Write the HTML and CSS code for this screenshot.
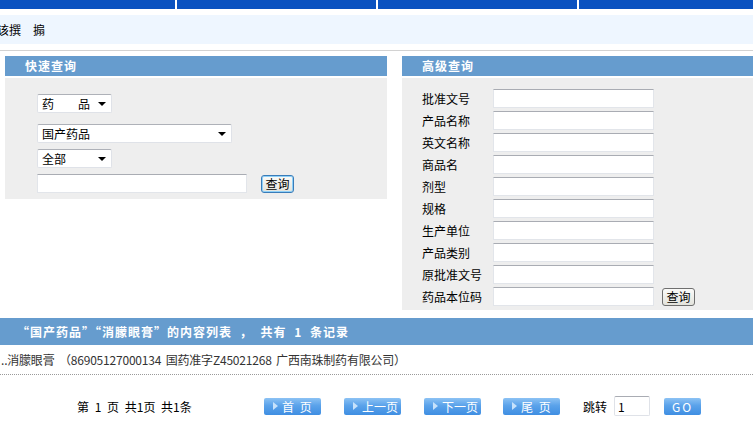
FILE: index.html
```html
<!DOCTYPE html>
<html>
<head>
    <meta charset="utf-8">
    <title>药品查询</title>
    <link rel="stylesheet" href="styles.css">
</head>
<body>

<div class="topnav">
    <span class="nav-cell first"></span>
    <span class="nav-cell mid"></span>
    <span class="nav-cell mid"></span>
    <span class="nav-cell last"></span>
</div>

<div class="crumb">该撰　搧</div>
<div class="rule"></div>

<div class="search">

    <div class="panel quick">
        <div class="panel-title">快速查询</div>
        <div class="panel-body">
            <div class="select short gap-big"><span>药　　品</span></div>
            <div class="select wide gap"><span>国产药品</span></div>
            <div class="select short gap"><span>全部</span></div>
            <div class="quick-row">
                <input type="text" class="text-input quick-input">
                <button type="button" class="query-btn focused">查询</button>
            </div>
        </div>
    </div> <!-- quick -->

    <div class="panel advanced">
        <div class="panel-title">高级查询</div>
        <div class="panel-body">
            <div class="adv-row"><label>批准文号</label><input type="text" class="text-input adv-input"></div>
            <div class="adv-row"><label>产品名称</label><input type="text" class="text-input adv-input"></div>
            <div class="adv-row"><label>英文名称</label><input type="text" class="text-input adv-input"></div>
            <div class="adv-row"><label>商品名</label><input type="text" class="text-input adv-input"></div>
            <div class="adv-row"><label>剂型</label><input type="text" class="text-input adv-input"></div>
            <div class="adv-row"><label>规格</label><input type="text" class="text-input adv-input"></div>
            <div class="adv-row"><label>生产单位</label><input type="text" class="text-input adv-input"></div>
            <div class="adv-row"><label>产品类别</label><input type="text" class="text-input adv-input"></div>
            <div class="adv-row"><label>原批准文号</label><input type="text" class="text-input adv-input"></div>
            <div class="adv-row"><label>药品本位码</label><input type="text" class="text-input adv-input">
                <button type="button" class="query-btn">查询</button></div>
        </div>
    </div> <!-- advanced -->

</div> <!-- search -->

<div class="result-title">“国产药品”“消朦眼膏”的内容列表 ， 共有 1 条记录</div>
<div class="result-row">..消朦眼膏 （86905127000134 国药准字Z45021268 广西南珠制药有限公司）</div>

<div class="pager">
    <span class="pager-info">第 1 页 共1页 共1条</span>
    <span class="page-btn">首 页</span>
    <span class="page-btn">上一页</span>
    <span class="page-btn">下一页</span>
    <span class="page-btn">尾 页</span>
    <span class="jump-label">跳转</span>
    <input type="text" class="jump-input" value="1">
    <span class="page-btn go">GO</span>
</div>

</body>
</html>
```

FILE: styles.css
```css
body {
    margin: 0;
    background: #ffffff;
    color: #000000;
    font-family: "Noto Sans CJK SC", "DejaVu Sans", sans-serif;
    font-size: 12px;
    overflow: hidden;
}

/* top blue strip */
.topnav {
    display: flex;
    height: 9px;
}
.nav-cell {
    background: #0b52c0;
    height: 9px;
}
.nav-cell.first { width: 175px; }
.nav-cell.mid { width: 199px; border-left: 2px solid #ffffff; }
.nav-cell.last { flex: 1; border-left: 2px solid #ffffff; }

.crumb {
    margin-top: 6px;
    height: 29px;
    line-height: 29px;
    background: #eef6ff;
    text-indent: -3px;
    white-space: nowrap;
    overflow: hidden;
}

.rule {
    margin-top: 6px;
    height: 1px;
    background: #d2d2d2;
}

/* search panels */
.search {
    display: flex;
    margin-top: 5px;
    padding-left: 5px;
    gap: 15px;
    align-items: flex-start;
}

.panel-title {
    height: 20px;
    line-height: 20px;
    background: #669cce;
    color: #ffffff;
    font-weight: bold;
    letter-spacing: 1px;
    padding-left: 20px;
    margin-bottom: 2px;
}

.panel-body {
    background: #eeeeee;
}

.quick {
    width: 382px;
}
.quick .panel-body {
    padding: 16px 0 6px 32px;
}

.advanced {
    flex: 1;
}
.advanced .panel-body {
    padding: 11px 0 4px 20px;
}

.select {
    position: relative;
    box-sizing: border-box;
    height: 19px;
    line-height: 17px;
    padding-left: 4px;
    background: #ffffff;
    border: 1px solid #dfe2e8;
    border-top-color: #aeb1b8;
    border-radius: 2px;
}
.select::after {
    content: "";
    position: absolute;
    right: 5px;
    top: 7px;
    border-left: 4px solid transparent;
    border-right: 4px solid transparent;
    border-top: 4px solid #000000;
}
.select.short { width: 75px; }
.select.wide { width: 195px; }
.select.gap-big { margin-bottom: 11px; }
.select.gap { margin-bottom: 6px; }

.text-input {
    box-sizing: border-box;
    height: 19px;
    margin: 0;
    padding: 0 3px;
    background: #ffffff;
    border: 1px solid #e2e5ea;
    border-top-color: #a9acb3;
    font-family: inherit;
    font-size: 12px;
    outline: none;
}

.quick-row {
    display: flex;
    align-items: center;
    height: 19px;
}
.quick-input { width: 210px; }

.query-btn {
    box-sizing: border-box;
    width: 33px;
    height: 18px;
    margin: 0 0 0 14px;
    padding: 0;
    font-family: inherit;
    font-size: 12px;
    line-height: 14px;
    color: #000000;
    background: linear-gradient(#fbfbf9, #e3e3dc);
    border: 1px solid #6f6f6f;
    border-radius: 3px;
}
.query-btn.focused {
    border-color: #3a7cb8;
    box-shadow: inset 0 0 0 1px #8fd0f8;
}

.adv-row {
    display: flex;
    align-items: center;
    height: 19px;
    margin-bottom: 3px;
}
.adv-row:last-child { margin-bottom: 0; }
.adv-row label {
    width: 71px;
}
.adv-input { width: 161px; }
.adv-row .query-btn { margin-left: 8px; }

/* result list */
.result-title {
    margin-top: 8px;
    height: 27px;
    line-height: 27px;
    background: #669cce;
    color: #ffffff;
    font-weight: bold;
    letter-spacing: 1px;
    word-spacing: 4px;
    padding-left: 17px;
    white-space: nowrap;
}

.result-row {
    height: 29px;
    line-height: 29px;
    padding-left: 1px;
    color: #333333;
    border-bottom: 1px dotted #9a9a9a;
    letter-spacing: -0.2px;
    word-spacing: 2px;
    white-space: nowrap;
}

/* pager */
.pager {
    display: flex;
    align-items: center;
    margin-top: 21px;
    padding-left: 77px;
    height: 20px;
}
.pager-info {
    width: 187px;
    word-spacing: 3px;
    white-space: nowrap;
}
.page-btn {
    box-sizing: border-box;
    display: flex;
    align-items: center;
    width: 57px;
    height: 17px;
    margin-right: 23px;
    padding-left: 9px;
    border-radius: 2px;
    background: linear-gradient(#8cc2f4, #5aa2ea 45%, #3f8ee2);
    color: #ffffff;
    font-size: 12px;
    word-spacing: 3px;
    white-space: nowrap;
}
.page-btn::before {
    content: "";
    border-top: 4px solid transparent;
    border-bottom: 4px solid transparent;
    border-left: 5px solid #c7e2fb;
    margin-right: 4px;
}
.page-btn:nth-of-type(4) { margin-right: 22px; }

.jump-label {
    margin-right: 7px;
}
.jump-input {
    box-sizing: border-box;
    width: 36px;
    height: 20px;
    margin: 0 14px 0 0;
    padding: 0 3px;
    border: 1px solid #dfe2e8;
    border-top-color: #a9acb3;
    border-radius: 2px;
    font-family: inherit;
    font-size: 12px;
}
.page-btn.go {
    width: 37px;
    margin-right: 0;
    padding-left: 0;
    justify-content: center;
    letter-spacing: 2px;
}
.page-btn.go::before {
    display: none;
}
```
